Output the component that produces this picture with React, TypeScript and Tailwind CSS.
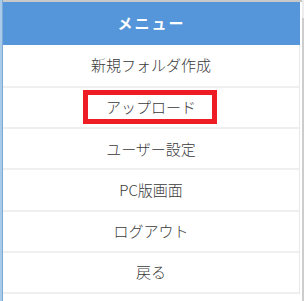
const items = [
  "新規フォルダ作成",
  "アップロード",
  "ユーザー設定",
  "PC版画面",
  "ログアウト",
  "戻る",
];

export default function App() {
  return (
    <div
      className="relative flex h-[301px] w-[304px] overflow-hidden bg-white"
      style={{ fontFamily: '"Noto Sans CJK JP", "Noto Sans", sans-serif' }}
    >
      <div className="w-[2px] bg-[#a9cbea]" />
      <div className="w-[1px] bg-[#7fa9d4]" />
      <div className="flex w-[297px] flex-col border-t-2 border-[#c8c8c8]">
        <div className="flex h-[43px] items-center justify-center bg-[#5596da] text-[15px] font-bold tracking-[2px] text-white">
          メニュー
        </div>
        <ul className="border-r border-[#e8e8e8]">
          {items.map((item, i) => (
            <li
              key={item}
              className={`flex items-center justify-center border-b-2 border-[#efefef] text-[15px] font-light text-[#3a3a3a] ${
                i === 0 ? "h-[43px]" : "h-[41.2px]"
              }`}
            >
              {item}
            </li>
          ))}
        </ul>
      </div>
      <div className="w-[2px] border-t-2 border-[#c8c8c8] bg-white" />
      <div className="flex w-[2px] flex-col">
        <div className="h-[18px] bg-[#ececec]" />
        <div className="flex-1 bg-[#cdcdcd]" />
      </div>
      <div className="absolute left-[83px] top-[90px] h-[34px] w-[134px] border-[5px] border-[#ee1c25]" />
    </div>
  );
}
